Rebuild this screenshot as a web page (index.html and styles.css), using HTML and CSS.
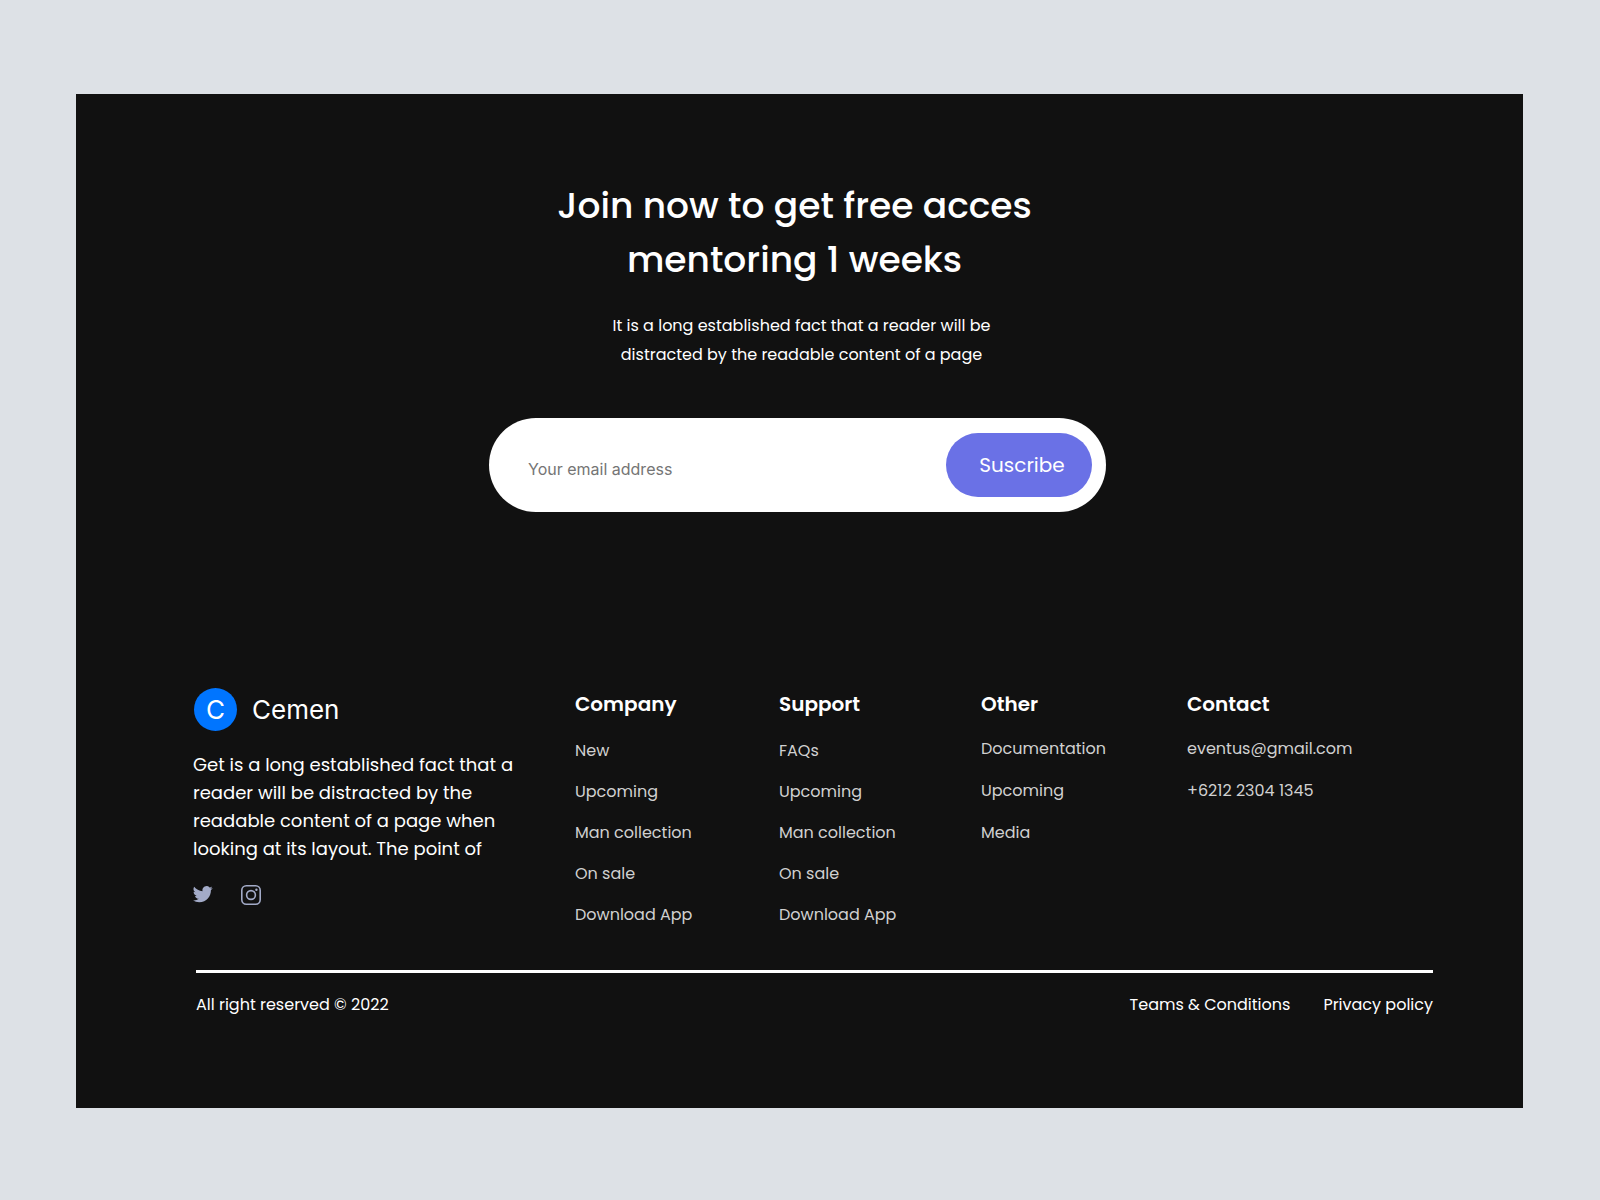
FILE: index.html
```html
<!DOCTYPE html>
<html lang="en">
<head>
<meta charset="utf-8">
<meta name="viewport" content="width=device-width, initial-scale=1">
<title>Cemen</title>
<link rel="stylesheet" href="styles.css">
</head>
<body>
<div class="panel">
  <section class="join">
    <h1 class="join-title">Join now to get free acces<br>mentoring 1 weeks</h1>
    <p class="join-text">It is a long established fact that a reader will be<br>distracted by the readable content of a page</p>
    <form class="subscribe">
      <input class="subscribe-input" type="email" placeholder="Your email address" aria-label="Your email address">
      <button class="subscribe-button" type="submit">Suscribe</button>
    </form>
  </section>

  <footer class="footer">
    <div class="columns">
      <div class="brand">
        <a class="logo" href="#"><span class="logo-mark">C</span><span>Cemen</span></a>
        <p class="brand-text">Get is a long established fact that a<br>reader will be distracted by the<br>readable content of a page when<br>looking at its layout. The point of</p>
        <div class="social">
          <a class="social-link" href="#" aria-label="Twitter">
            <svg width="20" height="20" viewBox="0 1 24 24" fill="currentColor"><path d="M23.6 4.6c-.9.4-1.8.6-2.8.8 1-.6 1.800-1.600 2.200-2.700-1 .6-2 1-3.100 1.200a4.900 4.900 0 0 0-8.400 4.500C7.400 8.200 3.800 6.200 1.400 3.200a4.900 4.900 0 0 0 1.500 6.500c-.8 0-1.600-.2-2.200-.6v.1c0 2.400 1.700 4.400 3.900 4.800-.7.2-1.500.2-2.200.1.600 2 2.400 3.400 4.600 3.400A9.900 9.900 0 0 1 0 19.500a14 14 0 0 0 7.500 2.200c9.100 0 14.300-7.700 14-14.600.8-.7 1.600-1.500 2.100-2.500z"/></svg>
          </a>
          <a class="social-link" href="#" aria-label="Instagram">
            <svg width="20" height="20" viewBox="0 0 20 20" fill="none" stroke="currentColor" stroke-width="1.600"><rect x=".8" y=".8" width="18.400" height="18.400" rx="4.500"/><circle cx="10" cy="10" r="4.400"/><circle cx="15.400" cy="4.800" r="1.200" fill="currentColor" stroke="none"/></svg>
          </a>
        </div>
      </div>
      <nav class="column" aria-labelledby="company">
        <h2 class="column-title" id="company">Company</h2>
        <ul class="links">
          <li><a href="#">New</a></li>
          <li><a href="#">Upcoming</a></li>
          <li><a href="#">Man collection</a></li>
          <li><a href="#">On sale</a></li>
          <li><a href="#">Download App</a></li>
        </ul>
      </nav>
      <nav class="column" aria-labelledby="support">
        <h2 class="column-title" id="support">Support</h2>
        <ul class="links">
          <li><a href="#">FAQs</a></li>
          <li><a href="#">Upcoming</a></li>
          <li><a href="#">Man collection</a></li>
          <li><a href="#">On sale</a></li>
          <li><a href="#">Download App</a></li>
        </ul>
      </nav>
      <nav class="column" aria-labelledby="other">
        <h2 class="column-title" id="other">Other</h2>
        <ul class="links links-short">
          <li><a href="#">Documentation</a></li>
          <li><a href="#">Upcoming</a></li>
          <li><a href="#">Media</a></li>
        </ul>
      </nav>
      <div class="column">
        <h2 class="column-title">Contact</h2>
        <ul class="links links-short">
          <li><a href="mailto:eventus@gmail.com">eventus@gmail.com</a></li>
          <li><a href="tel:+621223041345">+6212 2304 1345</a></li>
        </ul>
      </div>
    </div>
    <div class="legal">
      <span>All right reserved © 2022</span>
      <nav class="legal-links" aria-label="Legal">
        <a href="#">Teams &amp; Conditions</a>
        <a href="#">Privacy policy</a>
      </nav>
    </div>
  </footer>
</div>
</body>
</html>
```
FILE: styles.css
```css
* {
  box-sizing: border-box;
}

body {
  margin: 0;
  padding: 94px 77px 92px 76px;
  background: #dde1e6;
  color: #fff;
  font-family: Poppins, Inter, sans-serif;
  font-size: 16px;
  line-height: 24px;
}

h1, h2, p, ul {
  margin: 0;
  padding: 0;
}

a {
  color: inherit;
  text-decoration: none;
}

.panel {
  padding: 85px 90px 91px 117px;
  background: #111;
}

.join {
  display: flex;
  flex-direction: column;
  align-items: center;
  padding-right: 31px;
  text-align: center;
}

.join-title {
  padding-right: 6px;
  font-size: 36px;
  font-weight: 500;
  line-height: 54px;
}

.join-text {
  margin-top: 24px;
  padding-left: 8px;
  line-height: 29px;
}

.subscribe {
  display: flex;
  align-items: center;
  width: 100%;
  max-width: 617px;
  height: 94px;
  margin-top: 49px;
  padding: 0 14px 0 39px;
  border-radius: 47px;
  background: #fff;
}

.subscribe-input {
  flex: 1;
  min-width: 0;
  height: 64px;
  padding: 8px 0 0;
  border: 0;
  outline: 0;
  background: none;
  color: #111;
  font: 16px Inter, sans-serif;
}

.subscribe-input::placeholder {
  color: #757575;
}

.subscribe-button {
  width: 146px;
  height: 64px;
  padding: 0 0 0 6px;
  border: 0;
  border-radius: 32px;
  background: #6a71e6;
  color: #fff;
  font: 20px Poppins, Inter, sans-serif;
}

.footer {
  margin-top: 176px;
}

.columns {
  display: grid;
  grid-template-columns: 382fr 204fr 202fr 206fr 246fr;
}

.logo {
  display: flex;
  align-items: center;
  gap: 15px;
  padding-left: 1px;
  font-family: Inter, sans-serif;
  font-size: 26px;
}

.logo-mark {
  display: grid;
  place-items: center;
  width: 43px;
  height: 43px;
  border-radius: 50%;
  background: #0075ff;
}

.brand-text {
  margin-top: 20px;
  font-size: 18px;
  line-height: 28px;
}

.social {
  display: flex;
  align-items: center;
  gap: 28px;
  margin-top: 22px;
  color: #a3abc8;
}

.social-link {
  display: flex;
}

.column-title {
  font-size: 20px;
  font-weight: 600;
  line-height: 32px;
}

.links {
  display: grid;
  gap: 17px;
  margin-top: 19px;
  color: #d0d0d0;
  list-style: none;
}

.links-short {
  gap: 18px;
  margin-top: 17px;
}

.legal {
  display: flex;
  justify-content: space-between;
  margin: 43px 0 0 3px;
  padding-top: 20px;
  border-top: 3px solid #fff;
}

.legal-links {
  display: flex;
  gap: 33px;
}
```
